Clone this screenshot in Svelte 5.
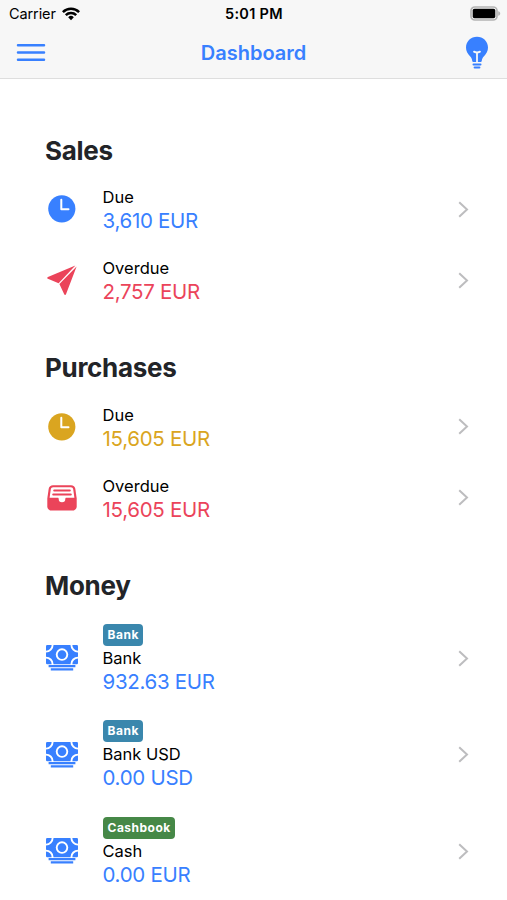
<script lang="ts">
	interface Row {
		icon: 'clock' | 'send' | 'inbox' | 'cash';
		label: string;
		amount: string;
		tone: 'primary' | 'danger' | 'warning';
		badge?: string;
	}

	interface Section {
		title: string;
		rows: Row[];
	}

	const sections: Section[] = [
		{
			title: 'Sales',
			rows: [
				{ icon: 'clock', label: 'Due', amount: '3,610 EUR', tone: 'primary' },
				{ icon: 'send', label: 'Overdue', amount: '2,757 EUR', tone: 'danger' }
			]
		},
		{
			title: 'Purchases',
			rows: [
				{ icon: 'clock', label: 'Due', amount: '15,605 EUR', tone: 'warning' },
				{ icon: 'inbox', label: 'Overdue', amount: '15,605 EUR', tone: 'danger' }
			]
		},
		{
			title: 'Money',
			rows: [
				{ icon: 'cash', label: 'Bank', amount: '932.63 EUR', tone: 'primary', badge: 'Bank' },
				{ icon: 'cash', label: 'Bank USD', amount: '0.00 USD', tone: 'primary', badge: 'Bank' },
				{ icon: 'cash', label: 'Cash', amount: '0.00 EUR', tone: 'primary', badge: 'Cashbook' }
			]
		}
	];
</script>

<div class="screen">
	<header>
		<div class="status">
			<div class="carrier">
				<span>Carrier</span>
				<svg width="18" height="14" viewBox="0 0 18 14" fill="none" stroke="#000" stroke-width="2.5">
					<path d="M0.9 5.1a11.5 11.5 0 0 1 16.2 0" />
					<path d="M3.8 8.1a7.4 7.4 0 0 1 10.4 0" />
					<path d="M6.2 10.2a4 4 0 0 1 5.6 0L9 13.2z" fill="#000" stroke="none" />
				</svg>
			</div>
			<span class="time">5:01 PM</span>
			<svg class="battery" width="31" height="15" viewBox="0 0 31 15">
				<rect x="1" y="1" width="26" height="13" rx="3.8" fill="none" stroke="#b4b4b4" stroke-width="1.7" />
				<rect x="2.7" y="2.8" width="22.6" height="9.4" rx="1.8" fill="#000" />
				<path d="M28.2 5.2c1.2.3 2 1.2 2 2.3s-.8 2-2 2.3z" fill="#b4b4b4" />
			</svg>
		</div>
		<div class="toolbar">
			<button class="menu" aria-label="Menu">
				<svg width="30" height="19" viewBox="0 0 30 19" stroke="#3880ff" stroke-width="2.5" stroke-linecap="round">
					<path d="M2 2.3h26M2 9.5h26M2 16.8h26" />
				</svg>
			</button>
			<h1>Dashboard</h1>
			<button class="hint" aria-label="Tips">
				<svg width="24" height="34" viewBox="0 0 24 34">
					<path d="M12 .7C5.9.7 1 5.4 1 11.5c0 3.7 1.6 6.3 4 8.7 1.5 1.5 2 2.9 2.2 4.6.1.8.6 1.2 1.4 1.2h6.8c.8 0 1.3-.4 1.4-1.2.2-1.7.7-3.1 2.2-4.6 2.4-2.4 4-5 4-8.7C23 5.4 18.1.7 12 .7z" fill="#3880ff" />
					<path d="M9 15.6c1.8 1 4.2 1 6 0M12 16.5V26" fill="none" stroke="#f7f7f7" stroke-width="1.8" stroke-linecap="round" />
					<path d="M8.5 28.4h7M9.6 31.6h4.8" stroke="#3880ff" stroke-width="2" stroke-linecap="round" />
				</svg>
			</button>
		</div>
	</header>

	<main>
		{#each sections as section}
			<section>
				<h2>{section.title}</h2>
				{#each section.rows as row}
					<div class="row {row.tone}" class:tagged={row.badge}>
						<div class="icon">
							{#if row.icon === 'clock'}
								<svg width="28" height="28" viewBox="0 0 28 28">
									<circle cx="13.8" cy="13.8" r="13.6" fill="currentColor" />
									<path d="M13.3 4.8v9.4h7.2" fill="none" stroke="#fff" stroke-width="2" stroke-linecap="round" stroke-linejoin="round" />
								</svg>
							{:else if row.icon === 'send'}
								<svg width="30" height="31" viewBox="0 0 30 31" fill="currentColor">
									<path d="M28.4.4.9 11.9c-.9.4-.9 1.5 0 1.9l10.7 4.4z" />
									<path d="M29.6 1.5 19 29.3c-.3.8-1.5.8-1.8 0l-4.8-10.4z" />
								</svg>
							{:else if row.icon === 'inbox'}
								<svg width="30" height="26" viewBox="0 0 30 26">
									<path d="M6 .2h18c2.300 0 3.900 1.300 4.300 3.600l1.400 9.600v8.100c0 2.300-1.800 4.100-4.100 4.100H4.400C2.100 25.600.3 23.800.3 21.500v-8.100l1.400-9.600C2.100 1.500 3.700.2 6 .2z" fill="currentColor" />
									<path d="M6.200 2.200h17.600c1.400 0 2.200.7 2.400 2l1.200 8.600h-8c-.7 0-1.100.4-1.100 1.100a3.300 3.300 0 0 1-6.600 0c0-.7-.4-1.100-1.100-1.100h-8l1.200-8.600c.2-1.300 1-2 2.400-2z" fill="#fff" />
									<path d="M7.200 5.500h15.600M6.200 9.500h17.600" stroke="currentColor" stroke-width="2" stroke-linecap="round" />
								</svg>
							{:else}
								<svg width="32" height="26" viewBox="0 0 32 26">
									<rect width="32" height="19.2" rx="1.3" fill="currentColor" />
									<g fill="none" stroke="#fff" stroke-width="1.9">
										<circle cx="16" cy="9.6" r="5.3" />
										<circle cx="0" cy="0" r="6.6" />
										<circle cx="32" cy="0" r="6.6" />
										<circle cx="0" cy="19.2" r="6.6" />
										<circle cx="32" cy="19.2" r="6.6" />
									</g>
									<path d="M2.6 20.1h26.8v2.2H2.6zM4.8 23.2h22.4v2.3H4.8z" fill="currentColor" />
								</svg>
							{/if}
						</div>
						<div class="text">
							{#if row.badge}
								<span class="badge" class:cashbook={row.badge === 'Cashbook'}>{row.badge}</span>
							{/if}
							<span class="label">{row.label}</span>
							<span class="amount">{row.amount}</span>
						</div>
						<svg class="chevron" width="11" height="17" viewBox="0 0 11 17" fill="none" stroke="#bdbdbf" stroke-width="2">
							<path d="M1.2 1.2 9 8.5l-7.8 7.3" />
						</svg>
					</div>
				{/each}
			</section>
		{/each}
	</main>
</div>

<style>
	:global(body) {
		background: #fff;
		overflow: hidden;
	}

	.screen {
		height: 900px;
		overflow: hidden;
		font-family: Inter, 'Liberation Sans', sans-serif;
		color: #000;
	}

	header {
		box-sizing: border-box;
		height: 79px;
		background: #f7f7f7;
		border-bottom: 1px solid #dedede;
	}

	.status {
		display: grid;
		grid-template-columns: 1fr auto 1fr;
		align-items: center;
		height: 27px;
		padding: 0 6px 0 9px;
		font-size: 14.5px;
	}

	.carrier {
		display: flex;
		align-items: center;
		gap: 6px;
		letter-spacing: -0.1px;
	}

	.time {
		font-weight: 600;
		font-size: 14.5px;
		letter-spacing: 0.3px;
		margin-right: 2px;
	}

	.battery {
		justify-self: end;
	}

	.toolbar {
		display: grid;
		grid-template-columns: 1fr auto 1fr;
		align-items: center;
		height: 51px;
		padding: 0 18px 0 16px;
	}

	button {
		display: flex;
		padding: 0;
		border: 0;
		background: none;
	}

	.hint {
		justify-self: end;
	}

	h1 {
		margin: 0 0 0 2px;
		font-size: 20px;
		font-weight: 600;
		color: #3880ff;
	}

	main {
		padding: 20px 38px 0 45px;
	}

	h2 {
		box-sizing: border-box;
		height: 75.5px;
		margin: 0;
		padding-top: 35.5px;
		font-size: 26px;
		line-height: 32px;
		font-weight: 700;
		letter-spacing: -0.3px;
		color: #222428;
	}

	.row {
		display: flex;
		align-items: center;
		box-sizing: border-box;
		height: 71px;
		padding-bottom: 1.5px;
	}

	.row.tagged {
		height: 96.5px;
		padding: 1px 0 0;
	}

	.icon {
		display: flex;
		justify-content: center;
		width: 33px;
		margin-right: 24.5px;
	}

	.text {
		display: flex;
		flex: 1;
		flex-direction: column;
		align-items: flex-start;
	}

	.label {
		font-size: 16.5px;
		line-height: 23px;
	}

	.amount {
		font-size: 20.5px;
		line-height: 23px;
		letter-spacing: -0.3px;
	}

	.badge {
		margin-bottom: 1px;
		padding: 0 4.5px 0 5px;
		border-radius: 4px;
		background: #3a87ad;
		color: #fff;
		font-size: 12px;
		font-weight: 700;
		line-height: 22px;
		letter-spacing: 0.5px;
	}

	.badge.cashbook {
		background: #468847;
	}

	.primary .icon,
	.primary .amount {
		color: #3880ff;
	}

	.danger .icon,
	.danger .amount {
		color: #eb445a;
	}

	.warning .icon,
	.warning .amount {
		color: #daa520;
	}
</style>
